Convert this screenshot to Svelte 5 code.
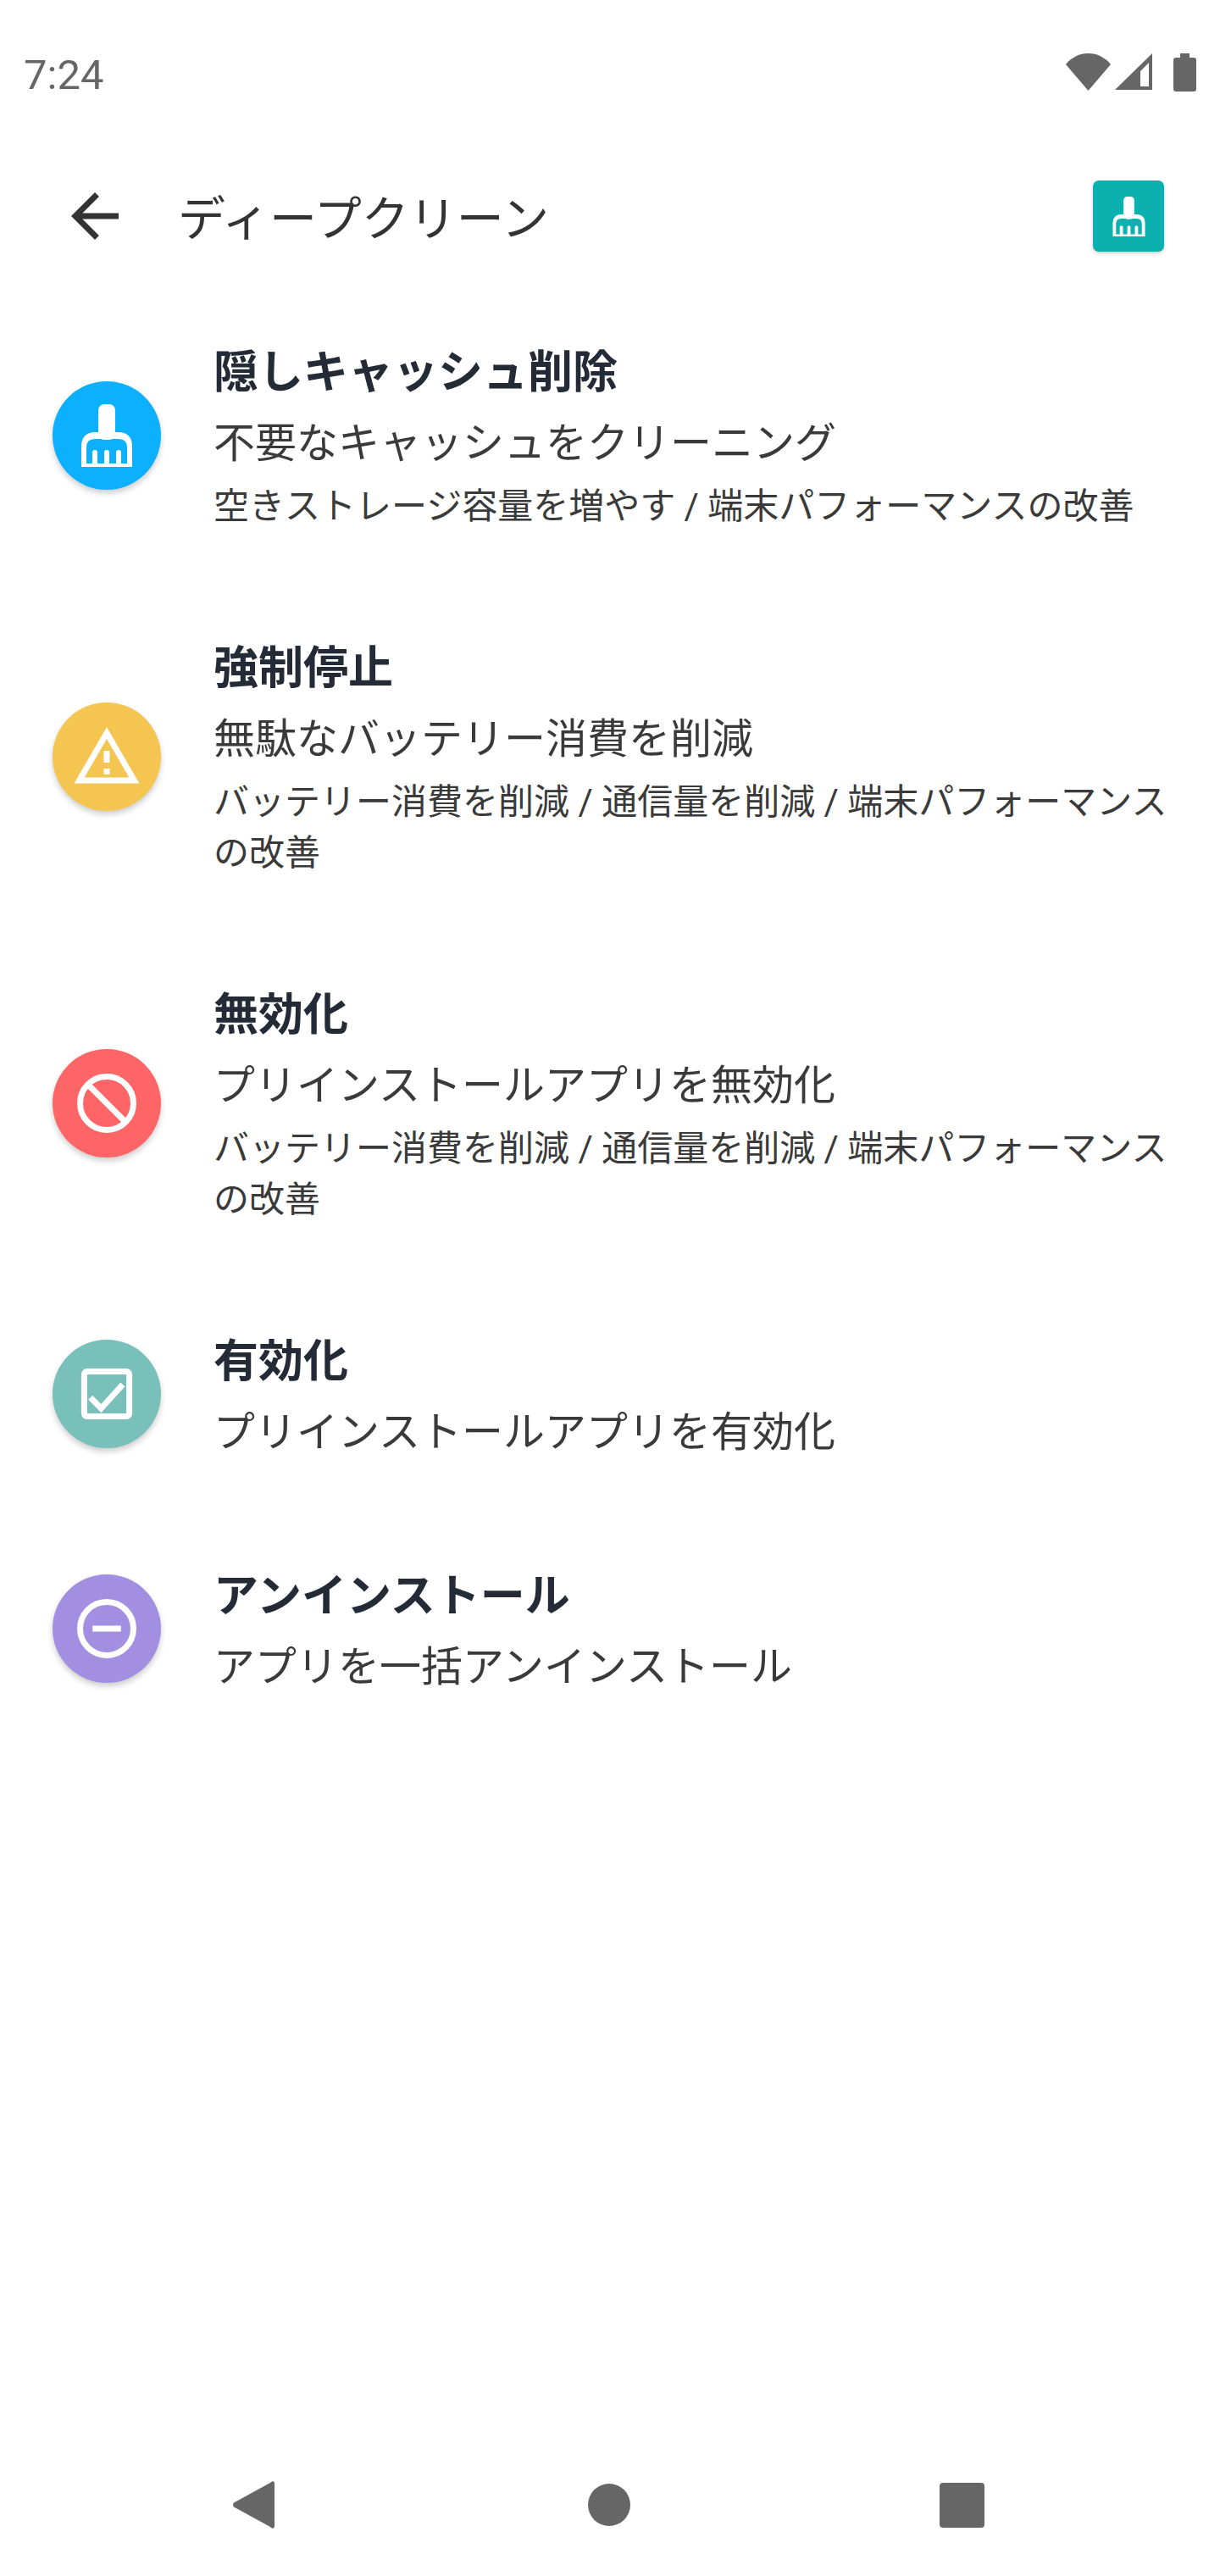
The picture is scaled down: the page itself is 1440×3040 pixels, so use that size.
<script lang="ts">
  // ディープクリーン menu screen
  const items = [
    {
      icon: 'broom',
      color: '#0db0fd',
      title: '隠しキャッシュ削除',
      sub: '不要なキャッシュをクリーニング',
      note: '空きストレージ容量を増やす / 端末パフォーマンスの改善'
    },
    {
      icon: 'warning',
      color: '#f4c551',
      title: '強制停止',
      sub: '無駄なバッテリー消費を削減',
      note: 'バッテリー消費を削減 / 通信量を削減 / 端末パフォーマンスの改善'
    },
    {
      icon: 'block',
      color: '#fe6567',
      title: '無効化',
      sub: 'プリインストールアプリを無効化',
      note: 'バッテリー消費を削減 / 通信量を削減 / 端末パフォーマンスの改善'
    },
    {
      icon: 'check',
      color: '#79bfba',
      title: '有効化',
      sub: 'プリインストールアプリを有効化',
      note: ''
    },
    {
      icon: 'remove',
      color: '#a28fe1',
      title: 'アンインストール',
      sub: 'アプリを一括アンインストール',
      note: ''
    }
  ];
</script>

{#snippet broom(fill, w, h)}
  <svg width={w} height={h} viewBox="0 0 60 74">
    <rect x="20" y="0" width="20" height="42" rx="7" fill={fill} />
    <path
      fill={fill}
      fill-rule="evenodd"
      d="M0 74V50Q0 33 17 33H43Q60 33 60 50V74ZM6 70H54V51Q54 41 44 41H16Q6 41 6 51Z"
    />
    <rect x="13" y="54" width="6" height="18" rx="3" fill={fill} />
    <rect x="27" y="54" width="6" height="18" rx="3" fill={fill} />
    <rect x="41" y="54" width="6" height="18" rx="3" fill={fill} />
  </svg>
{/snippet}

<div class="screen">
  <div class="status">
    <span class="time">7:24</span>
    <div class="status-icons">
      <svg width="53" height="44" viewBox="0 0 53 44">
        <path d="M26.5 44L0 13A33.5 33.5 0 0 1 53 13Z" />
      </svg>
      <svg class="signal" width="44" height="44" viewBox="0 0 44 44">
        <path fill-rule="evenodd" d="M44 0V43H0ZM40 11L30 21V39H40Z" />
      </svg>
      <svg class="battery" width="27" height="45" viewBox="0 0 27 45">
        <path d="M8 0H19V5H24Q27 5 27 8V42Q27 45 24 45H3Q0 45 0 42V8Q0 5 3 5H8Z" />
      </svg>
    </div>
  </div>

  <header class="toolbar">
    <svg class="back" width="84" height="84" viewBox="0 0 24 24">
      <path d="M20 11H7.83l5.59-5.59L12 4l-8 8 8 8 1.41-1.41L7.83 13H20v-2z" />
    </svg>
    <h1>ディープクリーン</h1>
    <div class="action">
      {@render broom('#fff', 39, 47)}
    </div>
  </header>

  <main class="list">
    {#each items as item}
      <div class="row">
        <div class="badge" style="background: {item.color}">
          {#if item.icon === 'broom'}
            {@render broom('#fff', 60, 74)}
          {:else}
            <svg width="84" height="84" viewBox="0 0 24 24" class="glyph">
              {#if item.icon === 'warning'}
                <path
                  class="solid"
                  d="M12 5.99L19.53 19H4.47L12 5.99M12 2L1 21h22L12 2zm1 14h-2v2h2v-2zm0-6h-2v4h2v-4z"
                />
              {:else if item.icon === 'block'}
                <circle cx="12" cy="12" r="9" />
                <line x1="5.7" y1="5.7" x2="18.3" y2="18.3" />
              {:else if item.icon === 'check'}
                <rect x="4.4" y="4.4" width="15.2" height="15.2" rx="1" />
                <polyline points="6.5,13.2 10.1,16.9 17.4,8.8" />
              {:else}
                <circle cx="12" cy="12" r="9" />
                <rect class="solid" x="7.2" y="11" width="9.6" height="2" />
              {/if}
            </svg>
          {/if}
        </div>
        <div class="text">
          <div class="title">{item.title}</div>
          <div class="sub">{item.sub}</div>
          {#if item.note}
            <div class="note">{item.note}</div>
          {/if}
        </div>
      </div>
    {/each}
  </main>

  <nav class="navbar">
    <svg width="50" height="56" viewBox="0 0 50 56">
      <path d="M47 0.5Q50 -0.5 50 3V53Q50 56.5 47 55.5Q46 55 45 54L2 30.5Q0 28 2 25.5L45 2Q46 1 47 0.5Z" />
    </svg>
    <span class="home"></span>
    <span class="recent"></span>
  </nav>
</div>

<style>
  :global(body) {
    margin: 0;
    background: #fff;
  }

  .screen {
    display: flex;
    flex-direction: column;
    width: 1440px;
    height: 3040px;
    font-family: Roboto, 'Noto Sans CJK JP', sans-serif;
    background: #fff;
  }

  /* status bar */
  .status {
    display: flex;
    align-items: center;
    justify-content: space-between;
    height: 176px;
    padding: 0 28px;
    box-sizing: border-box;
  }

  .time {
    font-size: 49px;
    color: #666;
  }

  .status-icons {
    display: flex;
    align-items: flex-start;
    padding-bottom: 6px;
    fill: #666;
  }

  .status-icons .signal {
    margin-left: 5px;
  }

  .status-icons .battery {
    margin-left: 25px;
  }

  /* toolbar */
  .toolbar {
    display: flex;
    align-items: center;
    height: 158px;
    padding: 0 66px 0 70px;
  }

  .back {
    fill: #333;
    flex: none;
  }

  h1 {
    flex: 1;
    margin: 0 0 0 56px;
    padding-bottom: 4px;
    font-size: 56px;
    font-weight: 400;
    color: #333;
  }

  .action {
    display: flex;
    align-items: center;
    justify-content: center;
    width: 84px;
    height: 84px;
    border-radius: 7px;
    background: #0ab1ae;
    box-shadow: 0 2px 4px rgba(0, 0, 0, 0.2);
  }

  /* menu rows */
  .list {
    flex: 1;
    display: flex;
    flex-direction: column;
    gap: 120px;
    padding: 65px 40px 0 62px;
  }

  .row {
    display: flex;
    align-items: center;
    gap: 62px;
  }

  .badge {
    flex: none;
    display: flex;
    align-items: center;
    justify-content: center;
    width: 128px;
    height: 128px;
    border-radius: 50%;
    box-shadow: 0 4px 7px rgba(0, 0, 0, 0.2);
  }

  .glyph {
    fill: none;
    stroke: #fff;
    stroke-width: 2;
  }

  .glyph .solid {
    fill: #fff;
    stroke: none;
  }

  .text {
    flex: 1;
    min-width: 0;
  }

  .title {
    font-size: 53px;
    line-height: 82px;
    font-weight: 700;
    color: #252a37;
  }

  .sub {
    margin-top: 10px;
    font-size: 49px;
    line-height: 65px;
    color: #3a3a3a;
  }

  .note {
    margin-top: 12px;
    font-size: 42px;
    line-height: 60px;
    color: #3a3a3a;
  }

  /* navigation bar */
  .navbar {
    display: flex;
    align-items: center;
    justify-content: center;
    height: 168px;
    padding-right: 5px;
    fill: #666;
  }

  .home {
    width: 50px;
    height: 50px;
    margin: 0 365px 0 370px;
    border-radius: 50%;
    background: #666;
  }

  .recent {
    width: 53px;
    height: 53px;
    border-radius: 4px;
    background: #666;
  }
</style>
